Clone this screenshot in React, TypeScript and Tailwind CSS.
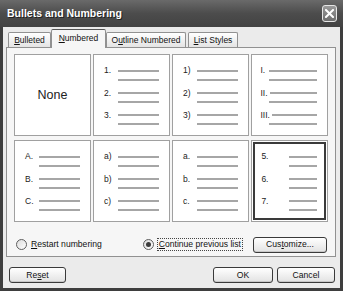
import React from "react";

type Kind = "std" | "roman" | "wide";

const cells: { labels: string[]; kind: Kind; selected?: boolean }[] = [
  { labels: ["1.", "2.", "3."], kind: "std" },
  { labels: ["1)", "2)", "3)"], kind: "std" },
  { labels: ["I.", "II.", "III."], kind: "roman" },
  { labels: ["A.", "B.", "C."], kind: "std" },
  { labels: ["a)", "b)", "c)"], kind: "std" },
  { labels: ["a.", "b.", "c."], kind: "std" },
  { labels: ["5.", "6.", "7."], kind: "wide", selected: true },
];

function Line() {
  return <div className="h-[2px] flex-1 bg-[#a6a6a6]" />;
}

function Group({ label, kind }: { label: string; kind: Kind }) {
  if (kind === "roman") {
    return (
      <div className="flex flex-col">
        <div className="flex h-[9px] items-center pl-[8.5px] pr-[10.5px]">
          <span className="mr-[2px] min-w-[6px] leading-none">{label}</span>
          <Line />
        </div>
        <div className="flex h-[9px] items-center pl-[16.7px] pr-[10.5px]">
          <Line />
        </div>
      </div>
    );
  }
  const wide = kind === "wide";
  return (
    <div className="flex flex-col">
      <div className={`flex h-[9px] items-center ${wide ? "pl-[9.4px] pr-[10.5px]" : "pl-[10px] pr-[10px]"}`}>
        <span className={`leading-none ${wide ? "w-[27.3px]" : "w-[14px]"}`}>{label}</span>
        <Line />
      </div>
      <div className={`flex h-[9px] items-center ${wide ? "pl-[36.7px] pr-[10.5px]" : "pl-[24px] pr-[10px]"}`}>
        <Line />
      </div>
    </div>
  );
}

function Cell({ labels, kind, selected }: { labels: string[]; kind: Kind; selected?: boolean }) {
  return (
    <div
      className={`flex h-[82px] w-[77px] flex-col gap-[4.3px] border border-[#a0a0a0] bg-white pt-[11px] text-[8.5px] text-[#222] ${
        selected ? "shadow-[inset_0_0_0_1px_#fff,inset_0_0_0_3px_#3a3a3a]" : ""
      }`}
    >
      {labels.map((l) => (
        <Group key={l} label={l} kind={kind} />
      ))}
    </div>
  );
}

function Radio({ checked }: { checked?: boolean }) {
  return (
    <span className="flex h-[11px] w-[11px] items-center justify-center rounded-full border border-[#5e5e5e] bg-gradient-to-br from-[#dcdcdc] to-white">
      {checked && <span className="h-[5px] w-[5px] rounded-full bg-[#3c3c3c]" />}
    </span>
  );
}

function Button({ children, className }: { children: React.ReactNode; className: string }) {
  return (
    <button
      className={`flex h-[16px] items-center justify-center rounded-[3px] border border-[#3a3a3a] bg-gradient-to-b from-white to-[#e2e2e2] text-[8.6px] leading-none text-[#111] shadow-[inset_0_-1px_0_#c8c8c8] ${className}`}
    >
      {children}
    </button>
  );
}

export default function App() {
  return (
    <div
      className="flex h-[291px] w-[343px] flex-col bg-[#3e3e3e] text-[#111]"
      style={{ fontFamily: '"Liberation Sans", Arial, sans-serif' }}
    >
      {/* Title bar */}
      <div className="flex h-[27px] items-center justify-between bg-gradient-to-b from-[#6a6a6a] via-[#4c4c4c] to-[#424242] pl-[7px] pr-[6px]">
        <span className="text-[10.5px] font-bold text-white [text-shadow:1px_1px_0_#222]">
          Bullets and Numbering
        </span>
        <button className="flex h-[17px] w-[15px] items-center justify-center rounded-[3px] border border-[#e6e6e6] bg-gradient-to-b from-[#9a9a9a] to-[#6e6e6e]">
          <svg width="9" height="9" viewBox="0 0 9 9">
            <path d="M1 1L8 8M8 1L1 8" stroke="white" strokeWidth="2" strokeLinecap="square" />
          </svg>
        </button>
      </div>

      {/* Body */}
      <div className="mx-[3px] mb-[3px] flex flex-1 flex-col bg-[#ebebeb] pl-[3px] pr-[4px]">
        {/* Tabs */}
        <div className="mt-[2px] flex h-[18px] items-end pl-[2px] text-[8.5px]">
          <div className="flex h-[15px] w-[43px] items-center justify-center rounded-t-[2px] border border-b-0 border-[#919191] bg-gradient-to-b from-white to-[#e4e4e4]">
            <span><u>B</u>ulleted</span>
          </div>
          <div className="relative z-10 -mb-px flex h-[19px] w-[55px] items-center justify-center rounded-t-[2px] border border-b-0 border-[#919191] border-t-[#555] bg-[#f6f6f6] pb-[2px]">
            <span><u>N</u>umbered</span>
          </div>
          <div className="flex h-[15px] w-[80px] items-center justify-center rounded-t-[2px] border border-b-0 border-[#919191] bg-gradient-to-b from-white to-[#e4e4e4]">
            <span>O<u>u</u>tline Numbered</span>
          </div>
          <div className="ml-[2px] flex h-[15px] w-[50px] items-center justify-center rounded-t-[2px] border border-b-0 border-[#919191] bg-gradient-to-b from-white to-[#e4e4e4]">
            <span><u>L</u>ist Styles</span>
          </div>
        </div>

        {/* Tab panel */}
        <div className="flex flex-col border border-[#919191] bg-[#f6f6f6] pb-[4px] pl-[7px] pr-[8px] pt-[6px]">
          <div className="grid grid-cols-[77px_77px_77px_77px] gap-x-[2px] gap-y-[4px]">
            <div className="flex h-[82px] w-[77px] items-center justify-center border border-[#a0a0a0] bg-white text-[12.5px] text-[#222]">
              None
            </div>
            {cells.map((c, i) => (
              <Cell key={i} {...c} />
            ))}
          </div>

          <div className="mt-[15px] flex h-[15px] items-center text-[8.6px]">
            <div className="ml-[2px] flex items-center gap-[4px]">
              <Radio />
              <span><u>R</u>estart numbering</span>
            </div>
            <div className="ml-[41px] flex items-center gap-[3px]">
              <Radio checked />
              <span className="border border-dotted border-[#444] px-px py-px leading-none">
                <u>C</u>ontinue previous list
              </span>
            </div>
            <Button className="ml-auto w-[74px]">
              <span>Cus<u>t</u>omize...</span>
            </Button>
          </div>
        </div>

        {/* Bottom buttons */}
        <div className="mt-[10px] flex items-center">
          <Button className="ml-[3px] w-[57px]">
            <span>Re<u>s</u>et</span>
          </Button>
          <Button className="ml-auto w-[60px]">OK</Button>
          <Button className="ml-[4px] mr-[1px] w-[58px]">Cancel</Button>
        </div>
      </div>
    </div>
  );
}
